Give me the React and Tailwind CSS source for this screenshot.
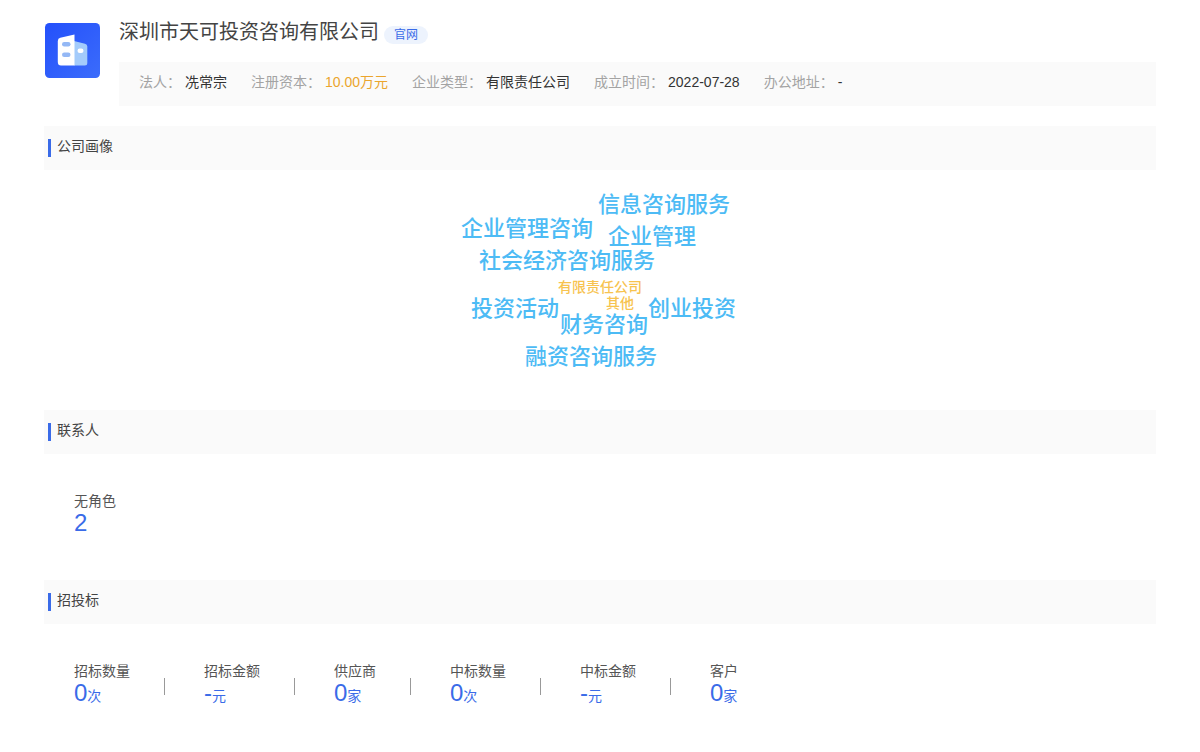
const facts = [
  { label: '法人', value: '冼常宗' },
  { label: '注册资本', value: '10.00万元', highlight: true },
  { label: '企业类型', value: '有限责任公司' },
  { label: '成立时间', value: '2022-07-28' },
  { label: '办公地址', value: '-' },
];

const contacts = [{ label: '无角色', value: '2', unit: '' }];

const bids = [
  { label: '招标数量', value: '0', unit: '次' },
  { label: '招标金额', value: '-', unit: '元' },
  { label: '供应商', value: '0', unit: '家' },
  { label: '中标数量', value: '0', unit: '次' },
  { label: '中标金额', value: '-', unit: '元' },
  { label: '客户', value: '0', unit: '家' },
];

// Offsets are measured from the top centre of the cloud.
const words = [
  { text: '信息咨询服务', x: -2, y: 19 },
  { text: '企业管理咨询', x: -139, y: 43 },
  { text: '企业管理', x: 8, y: 51 },
  { text: '社会经济咨询服务', x: -121, y: 75 },
  { text: '有限责任公司', x: -42, y: 107, small: true },
  { text: '其他', x: 6, y: 123, small: true },
  { text: '投资活动', x: -129, y: 123 },
  { text: '创业投资', x: 48, y: 123 },
  { text: '财务咨询', x: -40, y: 139 },
  { text: '融资咨询服务', x: -75, y: 171 },
];

function Logo() {
  return (
    <svg viewBox="0 0 56 56" className="h-14 w-14 shrink-0" aria-hidden="true">
      <defs>
        <linearGradient id="tile" x1="0" y1="0" x2="1" y2="1">
          <stop offset="0" stopColor="#2450fb" />
          <stop offset="1" stopColor="#3b6cfb" />
        </linearGradient>
      </defs>
      <rect x="1" y="1" width="55" height="55" rx="4.500" fill="url(#tile)" />
      <path d="M30 19l11 2.800q2.300.6 2.300 2.800v16.400q0 2.500-2.500 2.500H30z" fill="#a3cbfb" />
      <path d="M16.300 15.700L30.500 12.500v31H17q-3.200 0-3.200-3.500V19q0-2.700 2.500-3.300z" fill="#fff" />
      <rect x="18" y="20" width="8.500" height="4.500" rx="2.200" fill="#94b8f5" />
      <rect x="18" y="30.500" width="8.500" height="4.500" rx="2.200" fill="#94b8f5" />
      <rect x="33.500" y="26.500" width="6" height="4.500" rx="2.200" fill="#fff" />
    </svg>
  );
}

function Section({ title, children }) {
  return (
    <section>
      <div className="flex h-11 items-center bg-[#fafafa] pl-1">
        <span className="h-[18px] w-[3px] bg-[#3a6be8]" />
        <h2 className="pb-1 pl-1.5 text-sm text-[#444]">{title}</h2>
      </div>
      {children}
    </section>
  );
}

function Stats({ items }) {
  return (
    <dl className="flex h-[126px] items-start pt-[37px] pl-[30px]">
      {items.map((item, i) => (
        <div key={item.label} className="flex items-center">
          {i > 0 && <span className="mt-1 mr-[39px] ml-[34px] h-[17px] w-px bg-[#999]" />}
          <div>
            <dt className="text-sm leading-5 text-[#555]">{item.label}</dt>
            <dd className="text-2xl leading-6 text-[#3a6be8]">
              {item.value}
              <span className="text-sm leading-6">{item.unit}</span>
            </dd>
          </div>
        </div>
      ))}
    </dl>
  );
}

export default function App() {
  return (
    <main className="bg-white px-11 pt-[22px] font-['Liberation_Sans','Noto_Sans_CJK_SC',sans-serif]">
      <header className="mb-5 flex gap-[19px]">
        <Logo />
        <div className="min-w-0 flex-1">
          <div className="flex h-10 items-start gap-[5px]">
            <h1 className="text-xl leading-5 text-[#444]">深圳市天可投资咨询有限公司</h1>
            <a href="#website" className="mt-1 rounded-full bg-[#edf3fd] px-2.5 text-xs leading-[18px] text-[#3a6be8]">
              官网
            </a>
          </div>
          <dl className="flex min-h-11 flex-wrap items-center gap-x-6 bg-[#fafafa] px-5 pb-1 text-sm">
            {facts.map((fact) => (
              <div key={fact.label} className="flex gap-1">
                <dt className="text-[#a3a3a3]">{fact.label}：</dt>
                <dd className={fact.highlight ? 'text-[#eba52d]' : 'text-[#333]'}>{fact.value}</dd>
              </div>
            ))}
          </dl>
        </div>
      </header>

      <Section title="公司画像">
        <div className="relative mx-auto h-60 w-0">
          {words.map((word) => (
            <span
              key={word.text}
              className={
                word.small
                  ? 'absolute text-sm leading-5 font-medium whitespace-nowrap text-[#f7c34f]'
                  : 'absolute text-[22px] leading-8 font-medium whitespace-nowrap text-[#4dbbf5]'
              }
              style={{ left: word.x, top: word.y }}
            >
              {word.text}
            </span>
          ))}
        </div>
      </Section>

      <Section title="联系人">
        <Stats items={contacts} />
      </Section>

      <Section title="招投标">
        <Stats items={bids} />
      </Section>
    </main>
  );
}
